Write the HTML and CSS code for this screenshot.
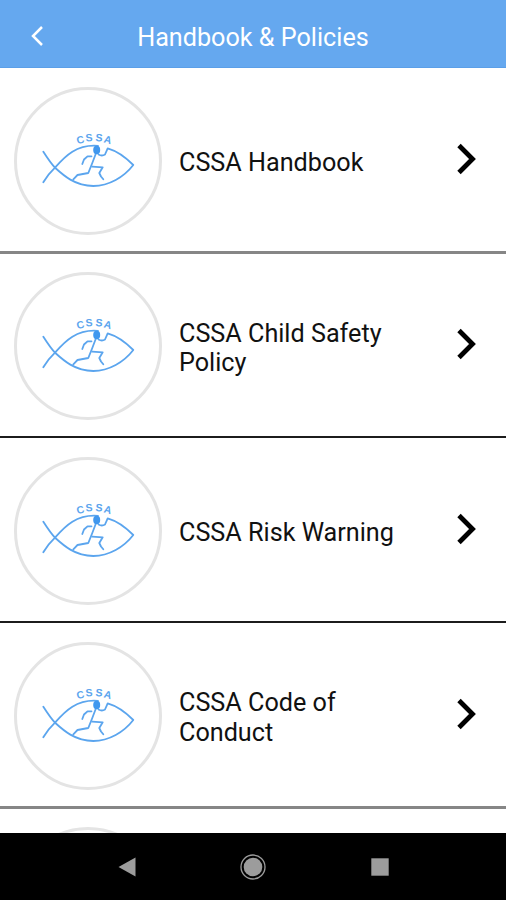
FILE: index.html
```html
<!DOCTYPE html>
<html lang="en">
<head>
  <meta charset="UTF-8" />
  <meta name="viewport" content="width=device-width, initial-scale=1.0"/>
  <title>Handbook &amp; Policies</title>
  <link rel="stylesheet" href="styles.css">
</head>
<body>

  <!-- shared icons -->
  <svg class="symbols" width="0" height="0">
    <symbol id="logo" viewBox="0 0 96 60">
      <g fill="none" stroke="#5ba5ee" stroke-width="1.8" stroke-linecap="round" stroke-linejoin="round">
        <path d="M2.3 51.3C6 45 10 40.5 14 36.7C24 25 36 13 57 14.8"/>
        <path d="M2.3 20.7C6 26.5 9.5 32 14 36.7C22 44 34 55 52.3 55C68 55 83 46 92.3 34C84 25.5 76 20 66.7 17.3L64 23.5Q61 25.5 57.5 23.5"/>
        <path d="M50.5 25.3L46.5 25.3L43 28.5L41.3 33"/>
        <path d="M54.7 23L51.3 32L47.3 42L36.5 44L32.3 48.3"/>
        <path d="M51.3 35.7L61.7 36.3L58.3 42L60 45.5L62.3 48.3"/>
      </g>
      <ellipse cx="55.7" cy="19" rx="3.5" ry="4.2" fill="#4097ee"/>
      <text class="logo-text" x="36.5 44.8 54.2 62.3" y="13.3 10.5 10 11.3" rotate="-14 -4 5 15">CSSA</text>
    </symbol>
    <symbol id="chevron" viewBox="0 0 22 34">
      <path d="M3 3.5L16.500 17L3 30.5" fill="none" stroke="#000" stroke-width="4.8"/>
    </symbol>
  </svg>

  <header class="header">
    <svg class="back" viewBox="0 0 14 22">
      <path d="M12 2L3 11L12 20" fill="none" stroke="#fff" stroke-width="2.5"/>
    </svg>
    <h1>Handbook &amp; Policies</h1>
  </header>

  <main class="list">
    <div class="row soft">
      <div class="avatar"><svg class="logo"><use href="#logo"/></svg></div>
      <div class="label">CSSA Handbook</div>
      <svg class="chevron"><use href="#chevron"/></svg>
    </div>
    <div class="row">
      <div class="avatar"><svg class="logo"><use href="#logo"/></svg></div>
      <div class="label">CSSA Child Safety Policy</div>
      <svg class="chevron"><use href="#chevron"/></svg>
    </div>
    <div class="row last-full">
      <div class="avatar"><svg class="logo"><use href="#logo"/></svg></div>
      <div class="label">CSSA Risk Warning</div>
      <svg class="chevron"><use href="#chevron"/></svg>
    </div>
    <div class="row soft">
      <div class="avatar"><svg class="logo"><use href="#logo"/></svg></div>
      <div class="label">CSSA Code of Conduct</div>
      <svg class="chevron"><use href="#chevron"/></svg>
    </div>
    <div class="row">
      <div class="avatar"></div>
    </div>
  </main>

  <nav class="navbar">
    <svg viewBox="0 0 26 26"><path d="M4.5 13L21.5 3.5V22.5Z" fill="#9c9c9c"/></svg>
    <svg viewBox="0 0 26 26">
      <circle cx="13" cy="13" r="12" fill="none" stroke="#9c9c9c" stroke-width="1.3"/>
      <circle cx="13" cy="13" r="9.3" fill="#9c9c9c"/>
    </svg>
    <svg viewBox="0 0 26 26"><rect x="4.3" y="4.3" width="17.4" height="17.4" fill="#9c9c9c"/></svg>
  </nav>

</body>
</html>
```
FILE: styles.css
```css
* {
  box-sizing: border-box;
}
body {
  margin: 0;
  height: 900px;
  display: flex;
  flex-direction: column;
  overflow: hidden;
  font-family: Roboto, sans-serif;
  background-color: #fff;
  color: #111;
}
.symbols {
  display: none;
}
.header {
  flex: none;
  height: 68px;
  display: grid;
  grid-template-columns: 60px 1fr 60px;
  align-items: center;
  padding-top: 8px;
  background-color: #65a8ef;
  border-bottom: 1px solid #5b9fe8;
}
.back {
  width: 14px;
  height: 22px;
  margin-left: 30px;
  margin-bottom: 3px;
}
h1 {
  margin: 0;
  font-size: 25.2px;
  font-weight: 400;
  text-align: center;
  color: #fff;
}
.list {
  flex: 1;
  min-height: 0;
  overflow: hidden;
}
.row {
  height: 184px;
  display: flex;
  align-items: center;
  padding: 2px 28px 0 14px;
  border-bottom: 2px solid #1c1c1c;
}
.row.last-full {
  height: 185px;
}
.row.soft {
  height: 186px;
  border-bottom: 3px solid #868686;
}
.avatar {
  flex: none;
  width: 148px;
  height: 148px;
  display: flex;
  align-items: center;
  justify-content: center;
  border: 3px solid #e4e4e4;
  border-radius: 50%;
}
.logo {
  width: 96px;
  height: 60px;
  margin-left: 2px;
}
.logo-text {
  font: bold 10.5px "Liberation Sans", sans-serif;
  fill: #5ba5ee;
}
.label {
  width: 230px;
  margin-left: 17px;
  padding-top: 4px;
  font-size: 25.2px;
  line-height: 29.5px;
}
.chevron {
  flex: none;
  width: 22px;
  height: 34px;
  margin-left: auto;
  margin-bottom: 4px;
}
.navbar {
  flex: none;
  height: 67px;
  display: flex;
  justify-content: center;
  align-items: center;
  gap: 100.5px;
  background-color: #000;
}
.navbar svg {
  width: 26px;
  height: 26px;
}
```
